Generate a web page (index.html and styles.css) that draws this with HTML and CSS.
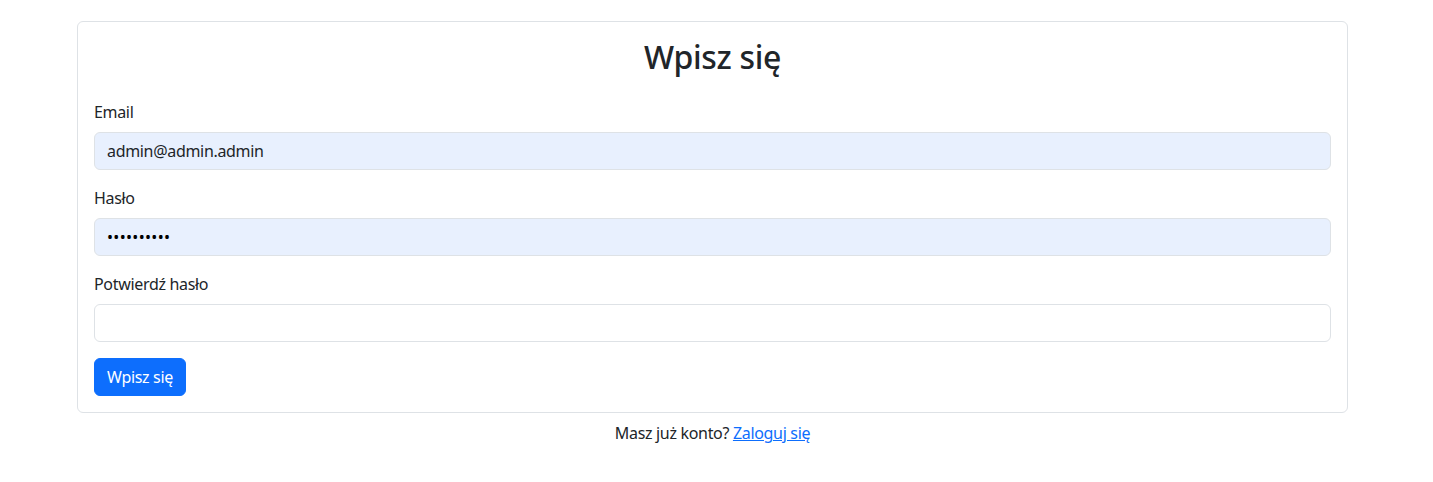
FILE: index.html
```html
<!DOCTYPE html>
<html lang="pl">
<head>
<meta charset="utf-8">
<title>Wpisz się</title>
<link rel="stylesheet" href="styles.css">
</head>
<body>
<div class="page">
  <div class="card">
    <form class="card-body">
      <h2 class="title">Wpisz się</h2>
      <div class="field">
        <label class="label" for="email">Email</label>
        <input class="input autofill" id="email" type="email" value="admin@admin.admin">
      </div>
      <div class="field">
        <label class="label" for="pass">Hasło</label>
        <input class="input autofill pass" id="pass" type="password" value="1234567890">
      </div>
      <div class="field">
        <label class="label" for="pass2">Potwierdź hasło</label>
        <input class="input" id="pass2" type="password" value="">
      </div>
      <button class="btn" type="button">Wpisz się</button>
    </form>
  </div>
  <p class="footer">Masz już konto? <a href="#" class="link">Zaloguj się</a></p>
</div>
</body>
</html>
```
FILE: styles.css
```css
* { box-sizing: border-box; }
body {
  margin: 0;
  font-family: "Segoe UI", "Noto Sans", "Liberation Sans", sans-serif;
  font-size: 16px;
  line-height: 1.5;
  letter-spacing: -0.02em;
  color: #212529;
  background: #fff;
}
.page {
  width: 1271px;
  margin: 21px 0 0 77px;
}
.card {
  border: 1px solid #dee2e6;
  border-radius: 6px;
}
.card-body {
  padding: 16px;
  margin: 0;
}
.title {
  margin: 0 0 24px;
  font-size: 32px;
  font-weight: 500;
  line-height: 1.2;
  text-align: center;
}
.field {
  margin-bottom: 16px;
}
.label {
  display: block;
  margin-bottom: 8px;
}
.input {
  display: block;
  width: 100%;
  height: 38px;
  padding: 6px 12px;
  font: inherit;
  letter-spacing: -0.02em;
  color: #212529;
  background: #fff;
  border: 1px solid #dee2e6;
  border-radius: 6px;
  outline: none;
}
.input.pass {
  letter-spacing: 0.02em;
  color: #000;
}
.input.autofill {
  background: #e8f0fe;
}
.btn {
  display: inline-block;
  height: 38px;
  padding: 6px 12px;
  font: inherit;
  letter-spacing: -0.02em;
  color: #fff;
  background: #0d6efd;
  border: 1px solid #0d6efd;
  border-radius: 6px;
  cursor: pointer;
}
.footer {
  margin: 8px 0 0;
  text-align: center;
}
.link {
  color: #0d6efd;
  text-decoration: underline;
}
```
